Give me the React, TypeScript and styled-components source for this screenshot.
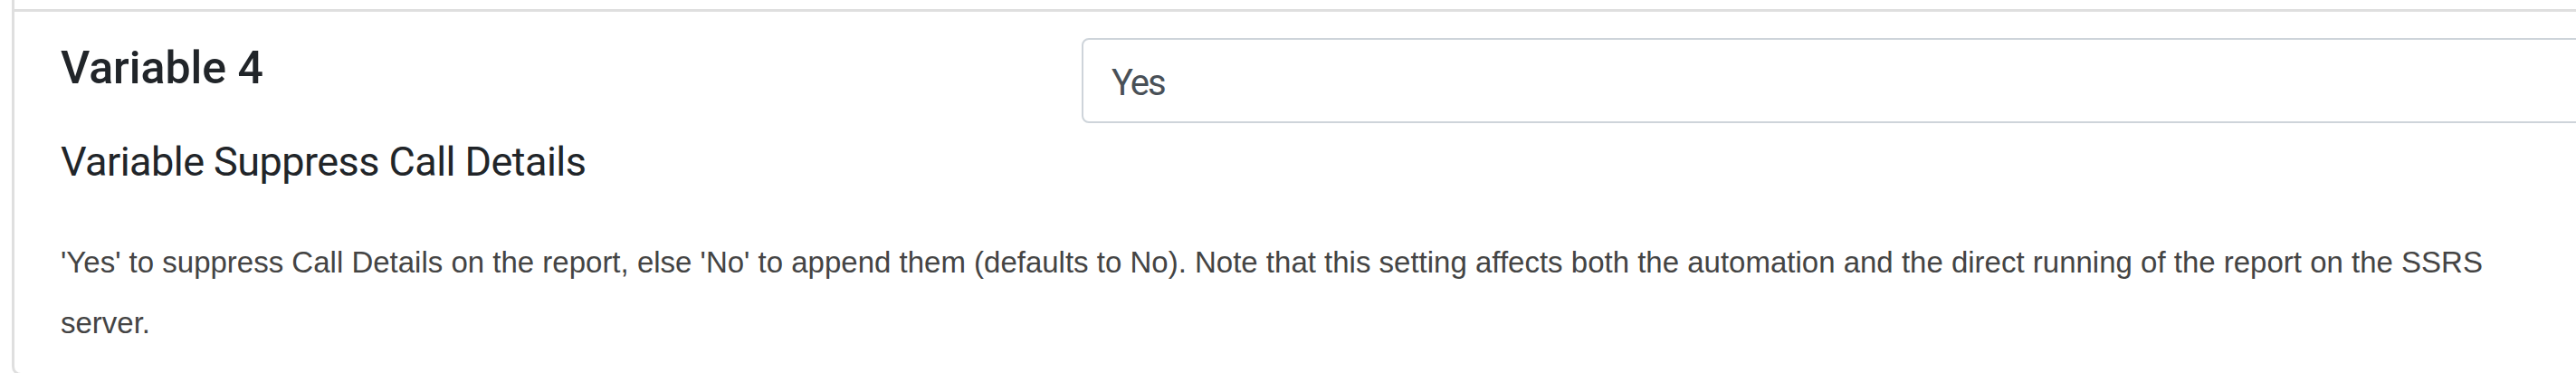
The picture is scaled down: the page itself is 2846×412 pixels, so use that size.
import React from 'react';
import styled, { createGlobalStyle } from 'styled-components';

const GlobalStyle = createGlobalStyle`
  body {
    margin: 0;
    background: #fff;
    overflow: hidden;
    font-family: Roboto, "Noto Sans", sans-serif;
  }
`

const Page = styled.div`
  padding-left: 13px;
  width: 3300px;
`

const PrevItem = styled.div`
  height: 10px;
  border-left: 3px solid #dfdfdf;
  border-right: 3px solid #dfdfdf;
`

const Card = styled.div`
  border: 3px solid #dfdfdf;
  border-radius: 0 0 10px 10px;
  padding: 29px 51px 22px;
`

const Row = styled.div`
  display: grid;
  grid-template-columns: 1053px 1fr;
  column-gap: 75px;
  align-items: start;
`

const Title = styled.h5`
  margin: 3px 0 0;
  font-size: 50px;
  line-height: 60px;
  font-weight: 500;
  color: #212529;
`

const Subtitle = styled.h6`
  margin: 47px 0 0;
  font-size: 45px;
  line-height: 54px;
  font-weight: 400;
  letter-spacing: -0.55px;
  color: #212529;
`

const ValueInput = styled.input`
  box-sizing: border-box;
  display: block;
  width: 100%;
  height: 94px;
  padding: 4px 31px 0;
  border: 2px solid #ced4da;
  border-radius: 8px;
  font-family: Roboto, "Noto Sans", sans-serif;
  font-size: 40px;
  letter-spacing: -2px;
  color: #495057;
  background: #fff;
  outline: none;
`

const Description = styled.p`
  margin: 50px 0 0;
  max-width: 2760px;
  font-family: "Liberation Sans", Arial, sans-serif;
  font-size: 33px;
  line-height: 67px;
  color: #444;
`

export default function App() {
  return (
    <Page>
      <GlobalStyle />
      <PrevItem />
      <Card>
        <Row>
          <div>
            <Title>Variable 4</Title>
            <Subtitle>Variable Suppress Call Details</Subtitle>
          </div>
          <ValueInput value="Yes" readOnly />
        </Row>
        <Description>
          'Yes' to suppress Call Details on the report, else 'No' to append them (defaults to No). Note that this setting affects both the automation and the direct running of the report on the SSRS server.
        </Description>
      </Card>
    </Page>
  );
}
